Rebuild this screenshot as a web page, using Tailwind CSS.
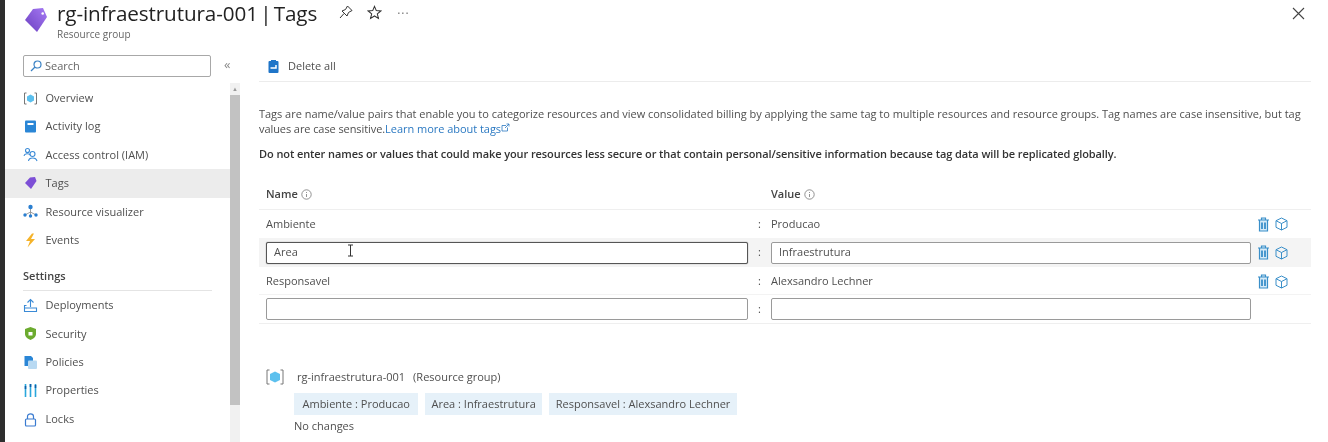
<!DOCTYPE html>
<html><head><meta charset="utf-8"><script src="https://cdn.jsdelivr.net/npm/@tailwindcss/browser@4"></script></head>
<body class="m-0 bg-white">
<div class="w-[1328px] h-[442px] overflow-hidden flex bg-white text-[#4f4f4f] font-['Open_Sans',sans-serif] text-[11px] blur-[0.4px]">
  <div class="w-[5px] shrink-0 bg-[#2e2e2e]"></div>
  <div class="flex-1 min-w-0 flex flex-col">
    <!-- header -->
    <header class="h-[50px] shrink-0 flex items-start pl-[18px] pr-[23px]">
      <svg class="w-[26px] h-[26px] mt-[7px]" viewBox="0 0 26 26"><defs><linearGradient id="g" x1="0" y1="1" x2="1" y2="0"><stop offset="0" stop-color="#6b3fc0"/><stop offset="1" stop-color="#a67af4"/></linearGradient></defs><path d="M2 13 L10 2 L20 1 L24 10 L14 25 Z" fill="url(#g)"/><circle cx="19.700" cy="6.500" r="1.300" fill="#fff"/></svg>
      <div class="ml-[8px] flex flex-col">
        <div class="text-[20.660px] leading-[26px] text-[#222] -tracking-[0.1px] [word-spacing:-3px]">rg-infraestrutura-001 | Tags</div>
        <div class="text-[10px] leading-[14px] text-[#666] mt-[1px]">Resource group</div>
      </div>
      <div class="ml-[21px] mt-[4px] flex items-center gap-[13px] text-[#444]">
        <svg class="w-[16px] h-[16px]" viewBox="0 0 16 16" fill="none" stroke="#333" stroke-width="1"><path d="M9.500 2 L14 6.500 L10.500 8.500 L9 12 L4 7 L7.500 5.500 Z M6 9.500 L2 14"/></svg>
        <svg class="w-[15px] h-[15px]" viewBox="0 0 16 16" fill="none" stroke="#333" stroke-width="1.100"><path d="M8 1.500 L9.900 6 L14.700 6.400 L11 9.500 L12.200 14.300 L8 11.700 L3.800 14.300 L5 9.500 L1.300 6.400 L6.100 6 Z"/></svg>
        <span class="ml-[2px] text-[12px] leading-none tracking-[1px] text-[#777] -mt-[4px]">...</span>
      </div>
      <svg class="ml-auto mt-[7px] w-[13px] h-[13px]" viewBox="0 0 13 13" fill="none" stroke="#444" stroke-width="1.100"><path d="M1 1 L12 12 M12 1 L1 12"/></svg>
    </header>
    <div class="flex-1 min-h-0 flex">
      <!-- sidebar -->
      <aside class="w-[235px] shrink-0 flex flex-col">
        <div class="flex items-center pl-[18px] h-[32px]">
          <div class="w-[188px] h-[22px] border border-[#a8a8a8] rounded-[2px] flex items-center pl-[6px] gap-[3px] text-[#666]">
            <svg class="w-[12px] h-[12px]" viewBox="0 0 12 12" fill="none" stroke="#3b82c4" stroke-width="1.200"><circle cx="7.500" cy="4.500" r="3.500"/><path d="M5 7 L1 11"/></svg>Search
          </div>
          <span class="ml-[13px] text-[13px] leading-none -mt-[3px] text-[#888]">«</span>
        </div>
        <div class="flex flex-1 min-h-0 mt-[1px]">
          <nav class="w-[225px] shrink-0 pt-[1px]">
            <div class="h-[28.400px] flex items-center pl-[18px] gap-[7.500px]"><svg class="w-[15px] h-[15px] shrink-0" viewBox="0 0 15 15"><path d="M3.500 2 H1.500 V13 H3.500 M11.500 2 H13.500 V13 H11.500" fill="none" stroke="#777" stroke-width="1"/><path d="M7.500 3.500 L11 5.500 V9.500 L7.500 11.500 L4 9.500 V5.500 Z" fill="#5cc0ee"/></svg>Overview</div>
            <div class="h-[28.400px] flex items-center pl-[18px] gap-[7.500px]"><svg class="w-[15px] h-[15px] shrink-0" viewBox="0 0 15 15"><rect x="2" y="1.500" width="11" height="12" rx="1" fill="#2a86d6"/><rect x="4.500" y="4" width="6" height="2" fill="#fff"/></svg>Activity log</div>
            <div class="h-[28.400px] flex items-center pl-[18px] gap-[7.500px]"><svg class="w-[15px] h-[15px] shrink-0" viewBox="0 0 15 15" fill="none" stroke="#3a8ad6" stroke-width="1.100"><circle cx="4.500" cy="3.500" r="2"/><path d="M1 9 C1.500 6.500 6 6 7 8"/><circle cx="9.500" cy="7" r="2.500"/><path d="M5.500 14 C6 10 13 10 14 14"/></svg>Access control (IAM)</div>
            <div class="h-[28.400px] flex items-center pl-[18px] gap-[7.500px] bg-[#ececec]"><svg class="w-[15px] h-[15px] shrink-0" viewBox="0 0 15 15"><path d="M2 7 L7 1.500 L12 1 L13.500 5 L8 13 Z" fill="#7d4fd6"/></svg>Tags</div>
            <div class="h-[28.400px] flex items-center pl-[18px] gap-[7.500px]"><svg class="w-[15px] h-[15px] shrink-0" viewBox="0 0 15 15"><path d="M7.500 4 V11 M2 11 L7.500 8 L13 11" stroke="#888" stroke-width="0.800" fill="none"/><circle cx="7.500" cy="3" r="2.200" fill="#2a7fd0"/><circle cx="2" cy="11" r="1.700" fill="#2a7fd0"/><circle cx="7.500" cy="12" r="1.700" fill="#2a7fd0"/><circle cx="13" cy="11" r="1.700" fill="#2a7fd0"/></svg>Resource visualizer</div>
            <div class="h-[28.400px] flex items-center pl-[18px] gap-[7.500px]"><svg class="w-[15px] h-[15px] shrink-0" viewBox="0 0 15 15"><path d="M9 0.500 L3 8 H7 L4.500 14.500 L12 6 H8 L11 0.500 Z" fill="#f5b32a"/></svg>Events</div>
            <div class="ml-[18px] mr-[18px] h-[37px] border-b border-[#e4e4e4] flex items-end pb-[6px] font-semibold text-[#444]">Settings</div>
            <div class="h-[28.400px] flex items-center pl-[18px] gap-[7.500px]"><svg class="w-[15px] h-[15px] shrink-0" viewBox="0 0 15 15" fill="none" stroke="#3a8ad6" stroke-width="1.100"><path d="M7.500 9 V1.500 M4.500 4.500 L7.500 1.500 L10.500 4.500 M3.500 7.500 H1.500 V13.500 H13.500 V10 H1.500"/></svg>Deployments</div>
            <div class="h-[28.400px] flex items-center pl-[18px] gap-[7.500px]"><svg class="w-[15px] h-[15px] shrink-0" viewBox="0 0 15 15"><path d="M7.500 1 L13 3 V8 C13 11 10 13 7.500 14 C5 13 2 11 2 8 V3 Z" fill="#6cab2f"/><rect x="5.500" y="6" width="4" height="3.500" fill="#fff"/></svg>Security</div>
            <div class="h-[28.400px] flex items-center pl-[18px] gap-[7.500px]"><svg class="w-[15px] h-[15px] shrink-0" viewBox="0 0 15 15"><path d="M1.500 1 H8 L10 3 V11 H1.500 Z" fill="#2a86d6"/><rect x="5" y="5.500" width="9" height="8.500" rx="1" fill="#b8d9f2"/></svg>Policies</div>
            <div class="h-[28.400px] flex items-center pl-[18px] gap-[7.500px]"><svg class="w-[15px] h-[15px] shrink-0" viewBox="0 0 15 15"><path d="M2.500 1 V14 M7.500 1 V14 M12.500 1 V14" stroke="#2aa7dc" stroke-width="1.600"/><path d="M2.500 3 V6 M7.500 1 V4 M12.500 2 V5" stroke="#0f5fa8" stroke-width="1.600"/></svg>Properties</div>
            <div class="h-[28.400px] flex items-center pl-[18px] gap-[7.500px]"><svg class="w-[15px] h-[15px] shrink-0" viewBox="0 0 15 15" fill="none" stroke="#3a7bd0" stroke-width="1.200"><rect x="2.500" y="7" width="10" height="7" rx="1"/><path d="M4.500 7 V4.500 C4.500 1 10.500 1 10.500 4.500 V7"/></svg>Locks</div>
          </nav>
          <div class="w-[10px] shrink-0 bg-[#f1f1f1] flex flex-col">
            <div class="h-[12px] text-[6px] leading-[12px] text-center text-[#999]">▲</div>
            <div class="h-[310px] bg-[#c2c2c2]"></div>
          </div>
        </div>
      </aside>
      <!-- main -->
      <main class="ml-[19px] w-[1052px] shrink-0 flex flex-col">
        <div class="h-[32px] shrink-0 border-b border-[#ececec] flex items-center pl-[9px] pt-[1px] gap-[9px]">
          <svg class="w-[11px] h-[13px]" viewBox="0 0 11 13"><rect x="0.500" y="1" width="10" height="12" rx="1" fill="#1f75c8"/><rect x="3" y="0" width="5" height="2" fill="#1f75c8"/><path d="M2.500 8 H8 V5" stroke="#fff" stroke-width="1.500" fill="none"/></svg>
          <span>Delete all</span>
        </div>
        <div class="pt-[24px] leading-[15px] w-[1052px] tracking-[-0.025px] whitespace-nowrap">Tags are name/value pairs that enable you to categorize resources and view consolidated billing by applying the same tag to multiple resources and resource groups. Tag names are case insensitive, but tag</div>
        <div class="leading-[15px] flex items-center whitespace-nowrap">
          <span class="tracking-[-0.08px]">values are case sensitive.</span>
          <span class="text-[#2b79c2] tracking-[-0.035px]">Learn more about tags</span>
          <svg class="w-[9px] h-[9px] -mt-[3px]" viewBox="0 0 9 9" fill="none" stroke="#2b79c2" stroke-width="0.800"><path d="M5 2.500 H1 V8 H6.500 V4.500 M4 5 L8 1 M5.500 1 H8 V3.500"/></svg>
        </div>
        <div class="mt-[10px] leading-[15px] font-semibold text-[#333] tracking-[-0.085px]">Do not enter names or values that could make your resources less secure or that contain personal/sensitive information because tag data will be replicated globally.</div>
        <!-- table -->
        <div class="mt-[18px] flex flex-col">
          <div class="h-[31px] border-b border-[#efefef] grid grid-cols-[482px_23px_480px_1fr] pl-[7px] items-center font-semibold text-[#444]">
            <span class="flex items-center gap-[3px]">Name <svg class="w-[11px] h-[11px]" viewBox="0 0 11 11" fill="none" stroke="#777" stroke-width="0.800"><circle cx="5.500" cy="5.500" r="4.700"/><path d="M5.500 5 V8 M5.500 3 V4"/></svg></span><span></span>
            <span class="flex items-center gap-[3px]">Value <svg class="w-[11px] h-[11px]" viewBox="0 0 11 11" fill="none" stroke="#777" stroke-width="0.800"><circle cx="5.500" cy="5.500" r="4.700"/><path d="M5.500 5 V8 M5.500 3 V4"/></svg></span>
          </div>
          <div class="h-[28px] grid grid-cols-[482px_23px_480px_1fr] pl-[7px] items-center">
            <span>Ambiente</span><span class="text-center">:</span><span>Producao</span>
            <div class="flex gap-[5px] pl-[6px] items-center"><svg class="w-[13px] h-[15px]" viewBox="0 0 13 15" fill="#d6eaf7" stroke="#3a8fc9" stroke-width="1.200"><path d="M1 3 H12 M4.500 3 V1 H8.500 V3 M2.500 3 V14 H10.500 V3"/><path d="M5 5.500 V12 M8 5.500 V12" stroke-width="1.800"/></svg><svg class="w-[13px] h-[14px]" viewBox="0 0 13 14" fill="none" stroke="#3a8fc9" stroke-width="1"><path d="M6.500 1 L12 3.700 V10.300 L6.500 13 L1 10.300 V3.700 Z M1 3.700 L6.500 6.500 L12 3.700 M6.500 6.500 V13"/></svg></div>
          </div>
          <div class="h-[29px] bg-[#f4f4f4] grid grid-cols-[482px_23px_480px_1fr] pl-[7px] items-center relative">
            <div class="h-[22px] bg-white border border-[#555] rounded-[2px] flex items-center pl-[7px] shadow-[0_0_1px_#555]">Area</div><span class="text-center">:</span>
            <div class="h-[22px] bg-white border border-[#9a9a9a] rounded-[2px] flex items-center pl-[7px]">Infraestrutura</div>
            <div class="flex gap-[5px] pl-[6px] items-center"><svg class="w-[13px] h-[15px]" viewBox="0 0 13 15" fill="#d6eaf7" stroke="#3a8fc9" stroke-width="1.200"><path d="M1 3 H12 M4.500 3 V1 H8.500 V3 M2.500 3 V14 H10.500 V3"/><path d="M5 5.500 V12 M8 5.500 V12" stroke-width="1.800"/></svg><svg class="w-[13px] h-[14px]" viewBox="0 0 13 14" fill="none" stroke="#3a8fc9" stroke-width="1"><path d="M6.500 1 L12 3.700 V10.300 L6.500 13 L1 10.300 V3.700 Z M1 3.700 L6.500 6.500 L12 3.700 M6.500 6.500 V13"/></svg></div>
            <svg class="absolute left-[88px] top-[6px] w-[7px] h-[13px]" viewBox="0 0 7 13" fill="none" stroke="#333" stroke-width="1"><path d="M1 1 H6 M3.500 1 V12 M1 12 H6"/></svg>
          </div>
          <div class="h-[28px] pt-[2px] border-b border-[#f3f3f3] grid grid-cols-[482px_23px_480px_1fr] pl-[7px] items-center">
            <span>Responsavel</span><span class="text-center">:</span><span>Alexsandro Lechner</span>
            <div class="flex gap-[5px] pl-[6px] items-center"><svg class="w-[13px] h-[15px]" viewBox="0 0 13 15" fill="#d6eaf7" stroke="#3a8fc9" stroke-width="1.200"><path d="M1 3 H12 M4.500 3 V1 H8.500 V3 M2.500 3 V14 H10.500 V3"/><path d="M5 5.500 V12 M8 5.500 V12" stroke-width="1.800"/></svg><svg class="w-[13px] h-[14px]" viewBox="0 0 13 14" fill="none" stroke="#3a8fc9" stroke-width="1"><path d="M6.500 1 L12 3.700 V10.300 L6.500 13 L1 10.300 V3.700 Z M1 3.700 L6.500 6.500 L12 3.700 M6.500 6.500 V13"/></svg></div>
          </div>
          <div class="h-[29px] border-b border-[#efefef] grid grid-cols-[482px_23px_480px_1fr] pl-[7px] items-center">
            <div class="h-[22px] bg-white border border-[#9a9a9a] rounded-[2px]"></div><span class="text-center">:</span>
            <div class="h-[22px] bg-white border border-[#9a9a9a] rounded-[2px]"></div>
          </div>
        </div>
        <!-- summary -->
        <div class="mt-[44px] pl-[7px] flex items-center gap-[13px] h-[18px]">
          <svg class="w-[18px] h-[16px]" viewBox="0 0 18 16"><path d="M3.500 1 H1 V15 H3.500 M14.500 1 H17 V15 H14.500" fill="none" stroke="#777" stroke-width="1"/><path d="M9 2.500 L14 5 V11 L9 13.500 L4 11 V5 Z" fill="#5cc0ee"/></svg>
          <span class="flex gap-[8px]"><span>rg-infraestrutura-001</span><span>(Resource group)</span></span>
        </div>
        <div class="mt-[7px] pl-[35px] flex gap-[7px]">
          <span class="h-[22px] px-[8.500px] bg-[#e6f1f9] flex items-center">Ambiente : Producao</span>
          <span class="h-[22px] px-[6px] bg-[#e6f1f9] flex items-center">Area : Infraestrutura</span>
          <span class="h-[22px] px-[7px] bg-[#e6f1f9] flex items-center">Responsavel : Alexsandro Lechner</span>
        </div>
        <div class="mt-[3px] pl-[35px] leading-[15px]">No changes</div>
      </main>
    </div>
  </div>
</div>
</body></html>
